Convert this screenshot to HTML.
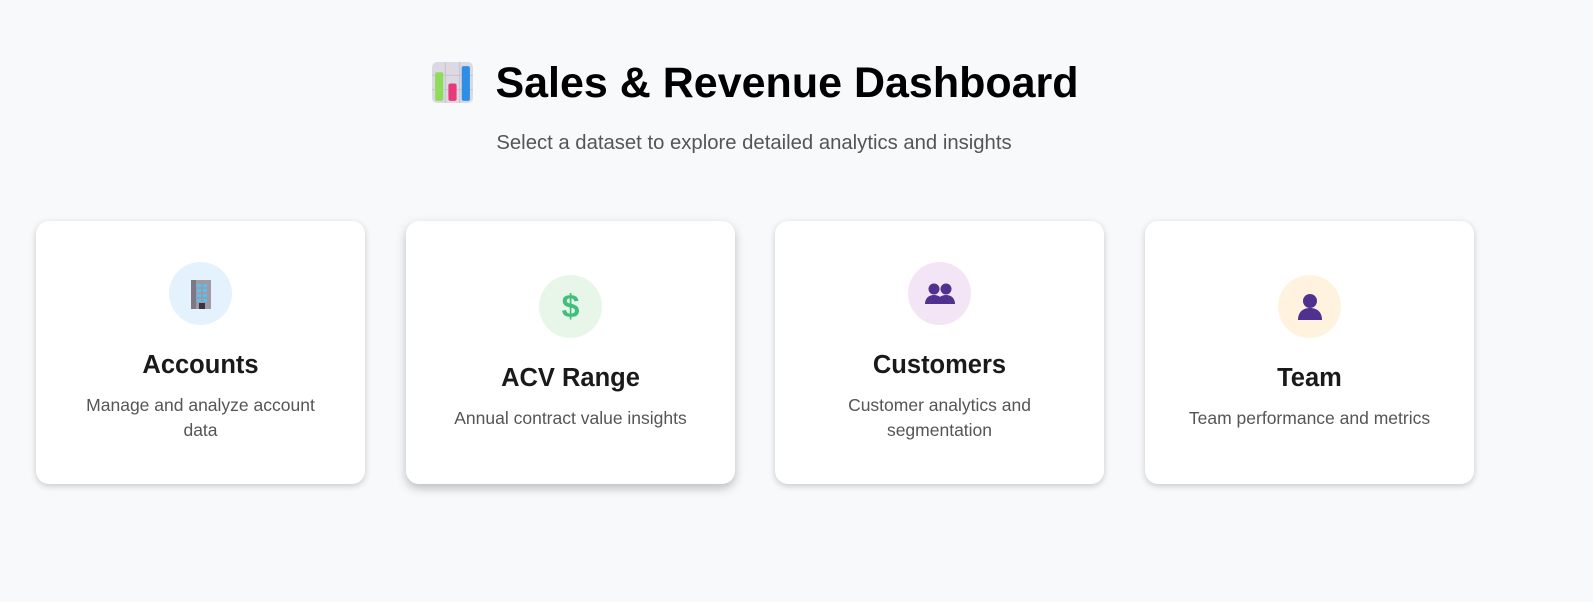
<!DOCTYPE html>
<html><head><meta charset="utf-8"><style>
*{margin:0;padding:0;box-sizing:border-box}
body{width:1593px;height:602px;background:#f8f9fb;font-family:"Liberation Sans",Arial,sans-serif;position:relative;overflow:hidden}
h1{position:absolute;top:57px;left:0;width:1510px;text-align:center;font-size:43px;font-weight:bold;color:#000;line-height:52px;white-space:nowrap}
h1 svg{vertical-align:-7px;margin-right:21px}
.sub{position:absolute;top:131px;left:0;width:1508px;text-align:center;font-size:20.3px;color:#555;line-height:24px}
.card{position:absolute;top:221px;width:329px;height:263px;background:#fff;border-radius:13px;box-shadow:0 2px 7px rgba(0,0,0,.2);display:flex;flex-direction:column;align-items:center;justify-content:center;text-align:center}
.card.h{box-shadow:0 4px 10px rgba(0,0,0,.25)}
.ic{width:63px;height:63px;border-radius:50%;display:flex;align-items:center;justify-content:center;margin-bottom:25px}
.card h2{font-size:25.5px;font-weight:bold;color:#1a1a1a;line-height:30px;margin-bottom:13px}
.card p{font-size:17.5px;color:#555;line-height:25px;width:260px}
</style></head><body>
<h1><svg width="43" height="43" viewBox="0 0 42 42"><rect x="1" y="1" width="40" height="40" rx="5" fill="#dcd9e3"/><path d="M14 1V41M28 1V41M1 14H41M1 28H41" stroke="#c6c2cf" stroke-width="1"/><rect x="4" y="11" width="8" height="28" rx="2" fill="#8fdc5a"/><rect x="17" y="22" width="8" height="17" rx="2" fill="#e8397a"/><rect x="30" y="5" width="8" height="34" rx="2" fill="#2e8ee6"/></svg>Sales &amp; Revenue Dashboard</h1>
<div class="sub">Select a dataset to explore detailed analytics and insights</div>

<div class="card" style="left:36px"><div class="ic" style="background:#e3f2fd"><svg width="34" height="34" viewBox="0 0 34 34"><rect x="7" y="3" width="20" height="29" fill="#9e9aa6"/><rect x="7" y="3" width="5" height="29" fill="#7d7886"/><g fill="#4fc3f7"><rect x="13" y="7" width="4" height="3"/><rect x="19" y="7" width="4" height="3"/><rect x="13" y="12" width="4" height="3"/><rect x="19" y="12" width="4" height="3"/><rect x="13" y="17" width="4" height="3"/><rect x="19" y="17" width="4" height="3"/><rect x="13" y="22" width="4" height="3"/><rect x="19" y="22" width="4" height="3"/></g><rect x="15" y="26" width="6" height="6" fill="#3b3344"/></svg></div><h2>Accounts</h2><p>Manage and analyze account data</p></div>

<div class="card h" style="left:406px"><div class="ic" style="background:#e8f5e9"><span style="font-size:32px;font-weight:bold;color:#3fbf7a">$</span></div><h2>ACV Range</h2><p>Annual contract value insights</p></div>

<div class="card" style="left:775px"><div class="ic" style="background:#f3e5f5"><svg width="32" height="24" viewBox="0 0 32 24"><g fill="#50318f"><circle cx="10" cy="7" r="5.5"/><path d="M1 22c0-6 4-9 9-9s9 3 9 9z"/><circle cx="22" cy="7" r="5.5"/><path d="M13 22c0-6 4-9 9-9s9 3 9 9z"/></g></svg></div><h2>Customers</h2><p>Customer analytics and segmentation</p></div>

<div class="card" style="left:1145px"><div class="ic" style="background:#fff3e0"><svg width="30" height="30" viewBox="0 0 30 30"><g fill="#50318f"><circle cx="15" cy="10" r="7"/><path d="M3 29c0-8 5-12 12-12s12 4 12 12z"/></g></svg></div><h2>Team</h2><p>Team performance and metrics</p></div>
</body></html>
